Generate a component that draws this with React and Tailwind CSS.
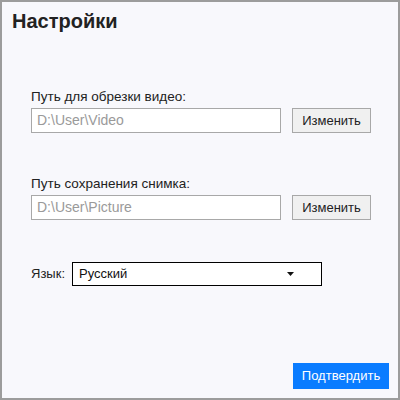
import React from 'react';

function PathField({ label, value, className }) {
  return (
    <div className={className}>
      <div className="text-[13.5px] leading-[16px] text-[#222]">{label}</div>
      <div className="flex items-center mt-[3px]">
        <div className="w-[250px] h-[25px] border border-[#a8a8a8] bg-white pl-[5px] flex items-center text-[14px] text-[#9a9a9a]">
          {value}
        </div>
        <button className="ml-[11px] w-[79px] h-[25px] border border-[#a8a8a8] bg-[#f0f0f0] text-[13px] text-[#222]">
          Изменить
        </button>
      </div>
    </div>
  );
}

export default function App() {
  return (
    <div
      className="w-[400px] h-[400px] border-2 border-[#9c9c9c] bg-[#f8f8fc] flex flex-col"
      style={{ fontFamily: '"Liberation Sans", Arial, sans-serif' }}
    >
      <h1 className="pt-[8px] pl-[10px] text-[20px] leading-[23px] font-bold text-[#222]">Настройки</h1>

      <div className="pl-[29px]">
        <PathField className="mt-[56px]" label="Путь для обрезки видео:" value="D:\User\Video" />
        <PathField className="mt-[43px]" label="Путь сохранения снимка:" value="D:\User\Picture" />

        <div className="flex items-center mt-[42px]">
          <span className="text-[13px] text-[#222]">Язык:</span>
          <div className="ml-[7px] w-[250px] h-[24px] border border-black bg-white flex items-center justify-between pl-[6px] pr-[27px] text-[13px] text-[#111]">
            <span>Русский</span>
            <svg width="7" height="4" viewBox="0 0 7 4">
              <path d="M0 0h7L3.5 4z" fill="#111" />
            </svg>
          </div>
        </div>
      </div>

      <div className="mt-auto flex justify-end pr-[9px] pb-[9px]">
        <button className="w-[96px] h-[26px] bg-[#0a7cff] text-white text-[13px]">Подтвердить</button>
      </div>
    </div>
  );
}
